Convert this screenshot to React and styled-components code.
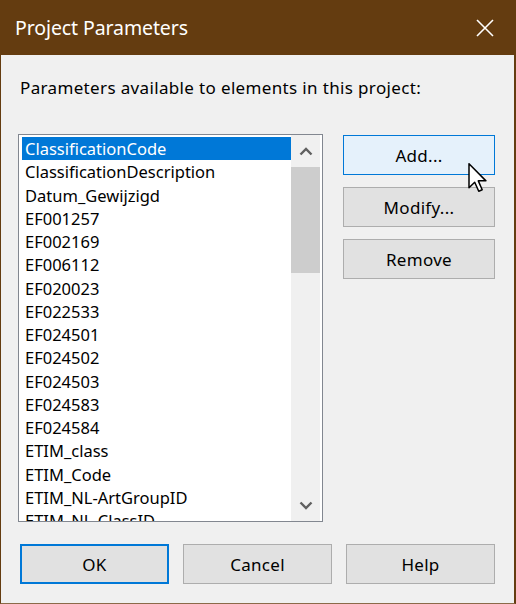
import React from 'react';
import styled, { createGlobalStyle } from 'styled-components';

const GlobalStyle = createGlobalStyle`
    html, body {
        margin: 0;
        padding: 0;
        background: #f0f0f0;
    }
    body {
        font-family: "Noto Sans", "Open Sans", sans-serif;
        color: #000;
    }
`;

const Window = styled.div`
    position: relative;
    width: 516px;
    height: 604px;
    box-sizing: border-box;
    display: flex;
    flex-direction: column;
    background: #f0f0f0;
    border-left: 1px solid #643c10;
    border-right: 2px solid #643c10;
    border-bottom: 1px solid #8a6a48;
    overflow: hidden;
`;

const TitleBar = styled.header`
    height: 55px;
    flex-shrink: 0;
    display: flex;
    align-items: center;
    justify-content: space-between;
    padding: 0 0 0 14px;
    background-color: #643c10;
    color: #fff;
`;

const Title = styled.h1`
    margin: 0;
    font-size: 19.5px;
    font-weight: 400;
    letter-spacing: -0.1px;
`;

const CloseBtn = styled.div`
    width: 56px;
    height: 55px;
    display: flex;
    align-items: center;
    justify-content: center;
    margin-right: 1px;
`;

const Body = styled.div`
    flex: 1;
    display: flex;
    flex-direction: column;
    padding: 22px 0 0 17px;
`;

const Label = styled.div`
    font-size: 17px;
    line-height: 22px;
    margin-left: 2px;
    letter-spacing: 0.35px;
`;

const Main = styled.div`
    display: flex;
    gap: 20px;
    margin-top: 35px;
`;

const ListBox = styled.div`
    width: 305px;
    height: 388px;
    box-sizing: border-box;
    border: 1px solid #828790;
    background: #fff;
    display: flex;
    overflow: hidden;
`;

const Items = styled.ul`
    flex: 1;
    list-style: none;
    margin: 0;
    padding: 2px 0 0 3px;
    overflow: hidden;
`;

const Item = styled.li`
    height: 23.27px;
    line-height: 23px;
    font-size: 16.5px;
    padding-left: 3px;
    white-space: nowrap;
    background: ${p => (p.$selected ? '#0078d7' : 'transparent')};
    color: ${p => (p.$selected ? '#fff' : '#000')};
`;

const ScrollBar = styled.div`
    width: 29px;
    margin-right: 2px;
    display: flex;
    flex-direction: column;
    background: #f0f0f0;
`;

const Arrow = styled.div`
    height: 32px;
    display: flex;
    align-items: center;
    justify-content: center;
    flex-shrink: 0;
`;

const Track = styled.div`
    flex: 1;
`;

const Thumb = styled.div`
    height: 106px;
    background: #cdcdcd;
`;

const SideButtons = styled.div`
    display: flex;
    flex-direction: column;
    gap: 12px;
    margin-top: 1px;
`;

const Button = styled.button`
    width: ${p => p.$w || 152}px;
    height: 40px;
    box-sizing: border-box;
    font-family: inherit;
    font-size: 17px;
    letter-spacing: 0.3px;
    color: #000;
    padding: 0;
    background: ${p => (p.$hover ? '#e5f1fb' : '#e1e1e1')};
    border: ${p => (p.$default ? '2px solid #0078d7' : p.$hover ? '1px solid #0078d7' : '1px solid #adadad')};
`;

const Footer = styled.div`
    display: flex;
    margin-top: 22px;
    padding-left: 2px;
    gap: 14px;
`;

const Cursor = styled.svg`
    position: absolute;
    left: 467px;
    top: 163px;
`;

const params = [
    'ClassificationCode',
    'ClassificationDescription',
    'Datum_Gewijzigd',
    'EF001257',
    'EF002169',
    'EF006112',
    'EF020023',
    'EF022533',
    'EF024501',
    'EF024502',
    'EF024503',
    'EF024583',
    'EF024584',
    'ETIM_class',
    'ETIM_Code',
    'ETIM_NL-ArtGroupID',
    'ETIM_NL-ClassID',
];

const Chevron = ({ up }) => (
    <svg width="14" height="9" viewBox="0 0 14 9">
        <path
            d={up ? 'M1.5 7.5 L7 2 L12.5 7.5' : 'M1.5 1.5 L7 7 L12.5 1.5'}
            fill="none"
            stroke="#606060"
            strokeWidth="2.4"
        />
    </svg>
);

export default function App() {
    return (
        <>
            <GlobalStyle />
            <Window>
                <TitleBar>
                    <Title>Project Parameters</Title>
                    <CloseBtn>
                        <svg width="18" height="18" viewBox="0 0 18 18">
                            <path d="M1 1 L17 17 M17 1 L1 17" stroke="#fff" strokeWidth="1.6" />
                        </svg>
                    </CloseBtn>
                </TitleBar>
                <Body>
                    <Label>Parameters available to elements in this project:</Label>
                    <Main>
                        <ListBox>
                            <Items>
                                {params.map((p, i) => (
                                    <Item key={p} $selected={i === 0}>{p}</Item>
                                ))}
                            </Items>
                            <ScrollBar>
                                <Arrow><Chevron up /></Arrow>
                                <Track><Thumb /></Track>
                                <Arrow><Chevron /></Arrow>
                            </ScrollBar>
                        </ListBox>
                        <SideButtons>
                            <Button $hover>Add...</Button>
                            <Button>Modify...</Button>
                            <Button>Remove</Button>
                        </SideButtons>
                    </Main>
                    <Footer>
                        <Button $w={149} $default>OK</Button>
                        <Button $w={149}>Cancel</Button>
                        <Button $w={149}>Help</Button>
                    </Footer>
                </Body>
                <Cursor width="20" height="30" viewBox="0 0 13 20">
                    <path
                        d="M0.5 0.5 L0.5 16.5 L4.3 12.8 L7 18.8 L9.3 17.8 L6.7 11.9 L11.8 11.9 Z"
                        fill="#fff"
                        stroke="#000"
                        strokeWidth="1"
                        strokeLinejoin="round"
                    />
                </Cursor>
            </Window>
        </>
    );
}
